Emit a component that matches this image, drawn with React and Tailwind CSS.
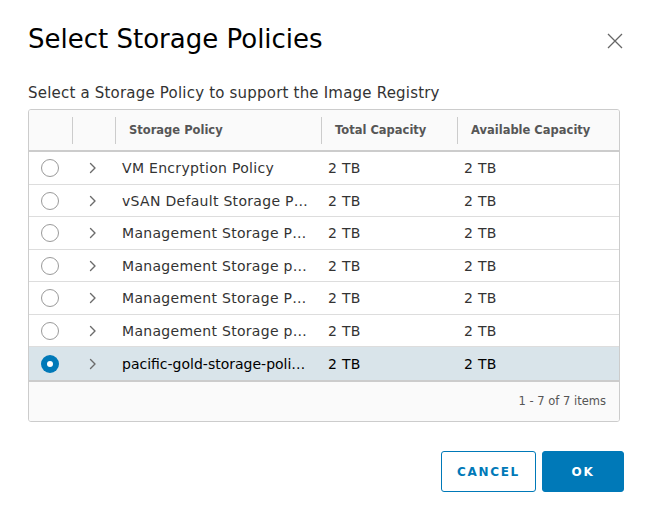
import React from "react";

const rows = [
  { name: "VM Encryption Policy" },
  { name: "vSAN Default Storage P…" },
  { name: "Management Storage P…" },
  { name: "Management Storage p…" },
  { name: "Management Storage P…" },
  { name: "Management Storage p…" },
  { name: "pacific-gold-storage-poli…", selected: true },
];

function Radio({ checked }) {
  if (checked) {
    return (
      <div className="w-[18px] h-[18px] rounded-full bg-[#0079b8] flex items-center justify-center">
        <div className="w-[6px] h-[6px] rounded-full bg-white" />
      </div>
    );
  }
  return <div className="w-[18px] h-[18px] rounded-full border border-[#9a9a9a] bg-white" />;
}

function Chevron() {
  return (
    <svg width="8" height="12" viewBox="0 0 8 12" fill="none">
      <path d="M1.5 1.5 L6 6 L1.5 10.5" stroke="#6b6b6b" strokeWidth="1.4" strokeLinecap="round" strokeLinejoin="round" />
    </svg>
  );
}

export default function App() {
  return (
    <div
      className="w-[650px] h-[516px] bg-white relative text-[#333]"
      style={{ fontFamily: '"DejaVu Sans", "Liberation Sans", sans-serif' }}
    >
      <div className="pl-[28px] pr-[26px] pt-[21px]">
        <div className="flex items-start justify-between">
          <h1 className="text-[26px] leading-[37px] text-black font-normal tracking-[0px]">
            Select Storage Policies
          </h1>
          <svg width="16" height="16" viewBox="0 0 16 16" className="mt-[12px] mr-[1px]">
            <path d="M1 1 L15 15 M15 1 L1 15" stroke="#666" strokeWidth="1.3" />
          </svg>
        </div>
        <p className="mt-[25px] text-[15px] leading-[20px] text-[#333] tracking-[0.2px]">
          Select a Storage Policy to support the Image Registry
        </p>
        <div className="mt-[6px] w-[592px] border border-[#ccc] rounded-[3px] overflow-hidden">
          <div className="grid grid-cols-[43px_43px_206px_136px_1fr] h-[42px] bg-[#fafafa] border-b-2 border-[#ccc] text-[11.5px] font-bold text-[#565656]">
            <div />
            <div className="flex items-center"><div className="w-px h-[27px] bg-[#ccc]" /></div>
            <div className="flex items-center"><div className="w-px h-[27px] bg-[#ccc]" /><span className="pl-[13px] pt-px">Storage Policy</span></div>
            <div className="flex items-center"><div className="w-px h-[27px] bg-[#ccc]" /><span className="pl-[13px] pt-px">Total Capacity</span></div>
            <div className="flex items-center"><div className="w-px h-[27px] bg-[#ccc]" /><span className="pl-[13px] pt-px">Available Capacity</span></div>
          </div>
          {rows.map((r, i) => (
            <div
              key={i}
              className={
                "grid grid-cols-[43px_43px_206px_136px_1fr] text-[14px] tracking-[0.3px] " +
                (r.selected
                  ? "h-[35px] bg-[#d9e4ea] border-b-2 border-[#ccc] text-[#000]"
                  : "h-[32.5px] border-b border-[#ddd] text-[#333]")
              }
            >
              <div className="flex items-center pl-[12px] pt-px"><Radio checked={r.selected} /></div>
              <div className="flex items-center pl-[17px] pt-px"><Chevron /></div>
              <div className={"flex items-center pl-[7px] pt-[2px] whitespace-nowrap " + (r.selected ? "tracking-[0px]" : "")}>{r.name}</div>
              <div className="flex items-center pl-[7px] pt-[2px]">2 TB</div>
              <div className="flex items-center pl-[7px] pt-[2px]">2 TB</div>
            </div>
          ))}
          <div className="h-[39px] bg-[#fafafa] flex items-center justify-end pr-[13px] text-[11.5px] text-[#565656]">
            1 - 7 of 7 items
          </div>
        </div>
        <div className="mt-[29px] flex justify-end gap-[6px]">
          <button className="w-[95px] h-[41px] border border-[#0079b8] rounded-[3px] bg-white text-[#0079b8] text-[12px] font-bold tracking-[0.14em]">
            CANCEL
          </button>
          <button className="w-[82px] h-[41px] border border-[#0079b8] rounded-[3px] bg-[#0079b8] text-white text-[12px] font-bold tracking-[0.14em]">
            OK
          </button>
        </div>
      </div>
    </div>
  );
}
